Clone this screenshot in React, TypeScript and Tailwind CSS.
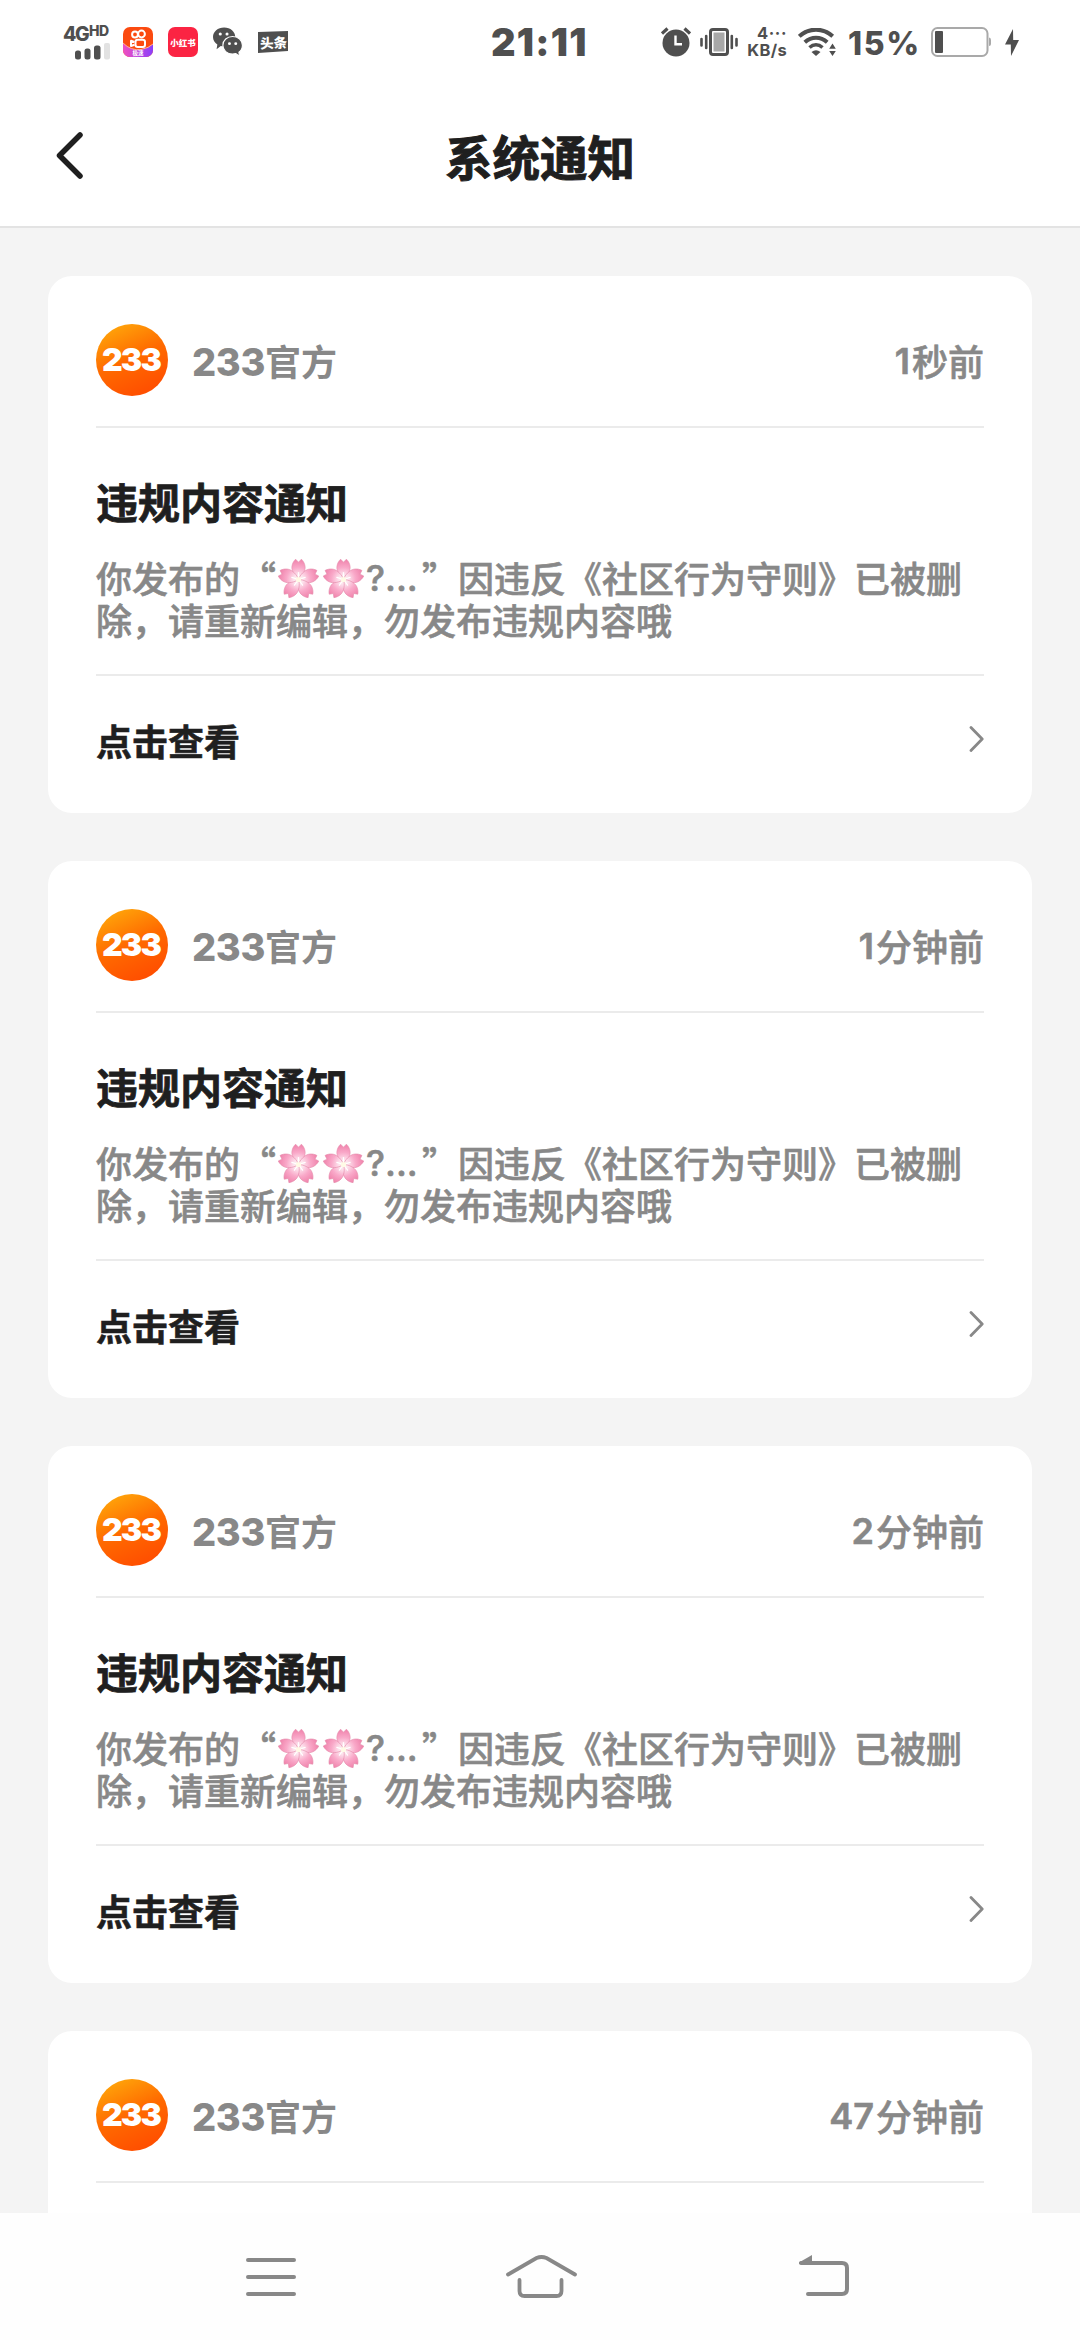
import React from "react";

// What a single notice looks like
interface Notice {
  id: number;
  sender: string;
  senderSuffix: string;
  amount: string; // number part of the time
  unit: string; // unit part of the time
}

const notices: Notice[] = [
  { id: 1, sender: "233", senderSuffix: "官方", amount: "1", unit: "秒前" },
  { id: 2, sender: "233", senderSuffix: "官方", amount: "1", unit: "分钟前" },
  { id: 3, sender: "233", senderSuffix: "官方", amount: "2", unit: "分钟前" },
  { id: 4, sender: "233", senderSuffix: "官方", amount: "47", unit: "分钟前" },
];

// Left side of the status bar
const SignalIcon = () => (
  <div className="w-[48px]">
    <div className="flex h-[18px] items-start font-[Inter] font-extrabold">
      <span className="w-[26px] text-[19.5px] leading-[18px] tracking-[-1.4px]">4G</span>
      <span className="text-[14px] leading-[12px] tracking-[-0.4px]">HD</span>
    </div>
    <svg width="48" height="17" viewBox="0 0 48 17" fill="#4f4f4f">
      <rect x="12" y="7.500" width="6" height="9" rx="2.500" />
      <rect x="21.500" y="5.500" width="6" height="11" rx="2.500" />
      <rect x="31" y="2.500" width="6.500" height="14" rx="2.500" />
      <rect x="41" y="0" width="6" height="16.500" rx="2" fill="#e2e2e2" />
    </svg>
  </div>
);

const KuaishouIcon = () => (
  <svg width="30" height="30" viewBox="0 0 30 30">
    <defs>
      <linearGradient id="ksBand" x1="0" y1="0" x2="1" y2="0">
        <stop offset="0" stopColor="#f04fc0" />
        <stop offset="1" stopColor="#8a3ffc" />
      </linearGradient>
      <clipPath id="ksClip">
        <rect width="30" height="30" rx="7" />
      </clipPath>
    </defs>
    <g clipPath="url(#ksClip)">
      <rect width="30" height="30" fill="#fb4a10" />
      <path d="M0 16Q8 24 18 22.500Q26 21 30 17V30H0Z" fill="url(#ksBand)" />
      <path d="M0 16Q8 24 18 22.500Q26 21 30 17" fill="none" stroke="#ffb199" strokeWidth="1" />
    </g>
    <g fill="none" stroke="#fff" strokeWidth="2">
      <circle cx="12" cy="7.500" r="2.900" />
      <circle cx="18.500" cy="7" r="3.400" />
      <rect x="12.500" y="12.700" width="9.500" height="7.300" rx="2.200" />
      <path d="M11.500 15L8 13.800V19L11.500 17.800" strokeLinejoin="round" />
    </g>
    <text x="15" y="27.800" fontFamily="'Noto Sans CJK SC', sans-serif" fontSize="5.500" fontWeight="700" fill="#fff" textAnchor="middle">
      极速
    </text>
  </svg>
);

const XiaohongshuIcon = () => (
  <div className="flex h-[30px] w-[30px] items-center justify-center rounded-[7px] bg-[#fb2443] text-[8.5px] leading-none font-black whitespace-nowrap text-white">
    小红书
  </div>
);

const WechatIcon = () => (
  <svg width="30" height="30" viewBox="0 0 31 30" fill="#4f4f4f">
    <path d="M11.500 0C5 0 0 4.300 0 9.800C0 13 1.700 15.800 4.500 17.600L3.700 22.500L8 19.200C9.100 19.500 10.300 19.600 11.500 19.600C18 19.600 23 15.300 23 9.800S18 0 11.500 0Z" />
    <path
      d="M20.300 9.300C14.500 9.300 10.200 13.200 10.200 18.400S14.500 27.500 20.300 27.500C21.500 27.500 22.600 27.300 23.600 27L27.500 29.700L26.800 25.600C29.100 24 30.400 21.400 30.400 18.400C30.400 13.200 26 9.300 20.300 9.300Z"
      stroke="#fff"
      strokeWidth="1.200"
    />
    <circle cx="7.500" cy="6.700" r="1.600" fill="#fff" />
    <circle cx="14.500" cy="6.700" r="1.600" fill="#fff" />
    <circle cx="17" cy="16.700" r="1.500" fill="#fff" />
    <circle cx="23.500" cy="16.700" r="1.500" fill="#fff" />
  </svg>
);

const ToutiaoIcon = () => (
  <div className="flex h-[22px] w-[30px] items-center justify-center bg-[#4f4f4f] text-[13.5px] leading-[22px] font-black whitespace-nowrap text-white [clip-path:polygon(0_1px,100%_0,100%_20px,0_100%)]">
    <span className="-rotate-2">头条</span>
  </div>
);

// Right side of the status bar
const AlarmIcon = () => (
  <svg width="30" height="30" viewBox="0 0 30 30" fill="none">
    <circle cx="15" cy="16" r="13.500" fill="#4f4f4f" />
    <path d="M1 6.500L6.500 1.500M29 6.500L23.500 1.500" stroke="#4f4f4f" strokeWidth="3.200" />
    <path d="M14.500 8.500V17.200H21" stroke="#fff" strokeWidth="2.400" />
  </svg>
);

const VibrateIcon = () => (
  <svg width="38" height="28" viewBox="0 0 38 28" fill="none">
    <rect x="10.500" y="1.500" width="17" height="25" rx="2.500" stroke="#4f4f4f" strokeWidth="3" />
    <rect x="13.500" y="4.500" width="11" height="19" fill="#a8a8a8" />
    <path d="M6.200 8V20M31.800 8V20M1.500 11V17.500M36.500 11V17.500" stroke="#4f4f4f" strokeWidth="2.600" strokeLinecap="round" />
  </svg>
);

const WifiIcon = () => (
  <svg width="38" height="28" viewBox="0 0 38 28" fill="none">
    <g stroke="#4f4f4f" strokeWidth="4">
      <path d="M1.300 8.300C11 -.600 25 -.600 34.700 8.300" />
      <path d="M6.800 14.200C13.500 8.200 22.500 8.200 29.200 14.200" />
      <path d="M11.500 19.500C15.500 16 20.500 16 24.500 19.500" strokeWidth="3.600" />
    </g>
    <path d="M13.500 24Q18 20.500 22.500 24L18 28Z" fill="#4f4f4f" />
    <path d="M31.200 20.800L34.500 15.500L37.800 20.800ZM31.200 23L34.500 28L37.800 23Z" fill="#4f4f4f" />
  </svg>
);

const BatteryIcon = () => (
  <svg width="60" height="30" viewBox="0 0 60 30" fill="none">
    <rect x="1" y="1" width="55.500" height="28" rx="5.500" stroke="#a9a9a9" strokeWidth="2" />
    <rect x="4" y="4" width="8" height="22" rx="1" fill="#4f4f4f" />
    <path d="M58 10.500Q60 10.500 60 13V17Q60 19 58 19Z" fill="#a9a9a9" />
  </svg>
);

const BoltIcon = () => (
  <svg width="14" height="27" viewBox="0 0 14 27" fill="#4f4f4f">
    <path d="M8 0L0 15.500H5.800L6 27L14 11H8.200Z" />
  </svg>
);

const StatusBar = () => (
  <div className="grid h-[84px] grid-cols-[428px_170px_1fr] items-center pl-[63px] text-[#4f4f4f]">
    <div className="flex items-center">
      <SignalIcon />
      <div className="ml-3 flex items-center gap-[15px]">
        <KuaishouIcon />
        <XiaohongshuIcon />
        <WechatIcon />
        <ToutiaoIcon />
      </div>
    </div>
    <p className="font-[Inter] text-[38px] leading-none font-black tracking-[1.3px]">21:11</p>
    <div className="flex items-center">
      <AlarmIcon />
      <div className="ml-[9px]">
        <VibrateIcon />
      </div>
      <div className="ml-[7px] w-[42px] text-right font-[Inter] text-[16.5px] leading-[17px] font-bold whitespace-nowrap">
        <p className="tracking-[0.6px]">4···</p>
        <p className="tracking-[0.3px]">KB/s</p>
      </div>
      <div className="ml-[11px]">
        <WifiIcon />
      </div>
      <p className="mt-[3px] ml-[12px] w-[70px] font-[Inter] text-[32px] leading-none font-extrabold tracking-[1.6px] whitespace-nowrap">
        15%
      </p>
      <div className="ml-[13px]">
        <BatteryIcon />
      </div>
      <div className="ml-[14px]">
        <BoltIcon />
      </div>
    </div>
  </div>
);

const TitleBar = () => (
  <header className="grid h-[144px] grid-cols-[1fr_auto_1fr] items-center border-b-2 border-[#e3e3e3] px-14">
    <button>
      <svg width="27" height="47" viewBox="0 0 27 47" fill="none">
        <path d="M24 3L3.500 23.500L24 44" stroke="#1f1f1f" strokeWidth="5.500" strokeLinecap="round" strokeLinejoin="round" />
      </svg>
    </button>
    <h1 className="mt-[1px] text-[47.5px] leading-none font-bold text-[#1f1f1f] [-webkit-text-stroke:1px_#1f1f1f]">
      系统通知
    </h1>
  </header>
);

const Avatar = () => (
  <div className="flex h-[72px] w-[72px] shrink-0 items-center justify-center rounded-full bg-linear-[155deg,#ffa60a_8%,#ff6a00_48%,#ff5000_85%]">
    <span className="mr-[2px] font-[Inter] text-[32px] leading-none font-black tracking-[-1.8px] text-white">233</span>
  </div>
);

// Cherry blossom, one petal turned five times round the centre
const petalAngles = [0, 72, 144, 216, 288];

const Sakura = () => (
  <svg width="41" height="41" viewBox="0 0 41 41" role="img" aria-label="🌸" className="mx-[2px] mt-[3px] shrink-0">
    <defs>
      <radialGradient id="petalFill" gradientUnits="userSpaceOnUse" cx="20.500" cy="21.500" r="20">
        <stop offset="0" stopColor="#fffdf2" />
        <stop offset="0.250" stopColor="#fde1ec" />
        <stop offset="0.600" stopColor="#f9a9c9" />
        <stop offset="1" stopColor="#f083ac" />
      </radialGradient>
    </defs>
    {petalAngles.map((angle) => (
      <g key={angle} transform={`rotate(${angle} 20.500 21.500)`}>
        <path
          d="M20.500 21.500C16.500 18.500 13.400 13 13.900 8.500C14.300 5.500 15.800 2.800 17.600 1.200L20.500 4.200L23.400 1.200C25.200 2.800 26.700 5.500 27.100 8.500C27.600 13 24.500 18.500 20.500 21.500Z"
          fill="url(#petalFill)"
          stroke="#e58bab"
          strokeWidth="0.600"
        />
        <path d="M20.500 21.500V14.500" stroke="#fff" strokeWidth="1.200" strokeLinecap="round" />
      </g>
    ))}
    <circle cx="20.500" cy="21.500" r="2.600" fill="#fffbe6" />
  </svg>
);

const NoticeCard = ({ notice }: { notice: Notice }) => (
  <li className="h-[537px] shrink-0 rounded-[24px] bg-white px-12 pt-12">
    {/* Sender and time */}
    <div className="flex h-[104px] items-start border-b-2 border-[#ebebeb] text-[36px] leading-[72px] text-[#888888]">
      <Avatar />
      <p className="ml-6 flex flex-1 font-bold">
        <span className="pt-[2px] font-[Inter] text-[38px] font-extrabold tracking-[-0.4px]">{notice.sender}</span>
        <span>{notice.senderSuffix}</span>
      </p>
      <p className="flex font-medium [-webkit-text-stroke:0.6px_#888888]">
        <span className="pt-[1px] pr-[2px] font-[Inter] text-[36px] font-semibold">{notice.amount}</span>
        <span>{notice.unit}</span>
      </p>
    </div>

    {/* Content */}
    <h2 className="mt-[52px] text-[42px] leading-[42px] font-bold text-[#1f1f1f] [-webkit-text-stroke:0.8px_#1f1f1f]">
      违规内容通知
    </h2>
    <div className="mt-[34px] text-[36px] leading-[42px] font-medium whitespace-nowrap text-[#888888] [-webkit-text-stroke:0.6px_#888888]">
      <div className="flex h-[42px] items-center">
        <span>你发布的“</span>
        <Sakura />
        <Sakura />
        <span className="w-[56px] pt-[2px] font-[Inter]">?...</span>
        <span>”因违反《社区行为守则》已被删</span>
      </div>
      <p>除，请重新编辑，勿发布违规内容哦</p>
    </div>

    {/* Link row */}
    <div className="mt-[34px] flex h-[139px] items-center justify-between border-t-2 border-[#ebebeb] text-[36px] leading-none font-bold text-[#1f1f1f]">
      <span className="-mt-[9px] [-webkit-text-stroke:0.6px_#1f1f1f]">点击查看</span>
      <svg width="15" height="26" viewBox="0 0 15 26" fill="none" className="-mt-[11px]">
        <path d="M2 1.500L13.200 13L2 24.500" stroke="#888888" strokeWidth="2.800" strokeLinecap="round" strokeLinejoin="round" />
      </svg>
    </div>
  </li>
);

const NavBar = () => (
  <nav className="flex h-[127px] shrink-0 bg-[#fefefe] pt-[42px] pl-[246px]">
    <svg width="50" height="44" viewBox="0 0 50 44" fill="none" stroke="#888888" strokeWidth="4" strokeLinecap="round">
      <path d="M2 5H48M2 22H48M2 39H48" />
    </svg>
    <svg width="71" height="44" viewBox="0 0 71 44" fill="none" stroke="#888888" strokeWidth="3.800" strokeLinecap="round" className="ml-[210px]">
      <path d="M2 19.500L30.500 3Q35.500 1 40.500 3L69 19.500" />
      <path d="M13.500 25V36Q13.500 41 18.500 41H50.500Q55.500 41 55.500 36V25" />
    </svg>
    <svg width="52" height="44" viewBox="0 0 52 44" fill="none" stroke="#888888" strokeWidth="4" strokeLinecap="round" className="ml-[221px]">
      <path d="M3 8H44Q49 8 49 13V34Q49 39 44 39H10" />
      <path d="M1 7.500L14 0V9H1Z" fill="#888888" stroke="none" />
    </svg>
  </nav>
);

function App() {
  return (
    <div
      lang="zh-CN"
      className="flex h-[2340px] w-[1080px] flex-col overflow-hidden bg-[#f4f4f4] font-['Noto_Sans_CJK_SC',sans-serif]"
    >
      <div className="shrink-0 bg-white">
        <StatusBar />
        <TitleBar />
      </div>
      <ul className="flex min-h-0 flex-1 flex-col gap-12 overflow-hidden px-12 pt-12">
        {notices.map((notice) => (
          <NoticeCard key={notice.id} notice={notice} />
        ))}
      </ul>
      <NavBar />
    </div>
  );
}

export default App;
